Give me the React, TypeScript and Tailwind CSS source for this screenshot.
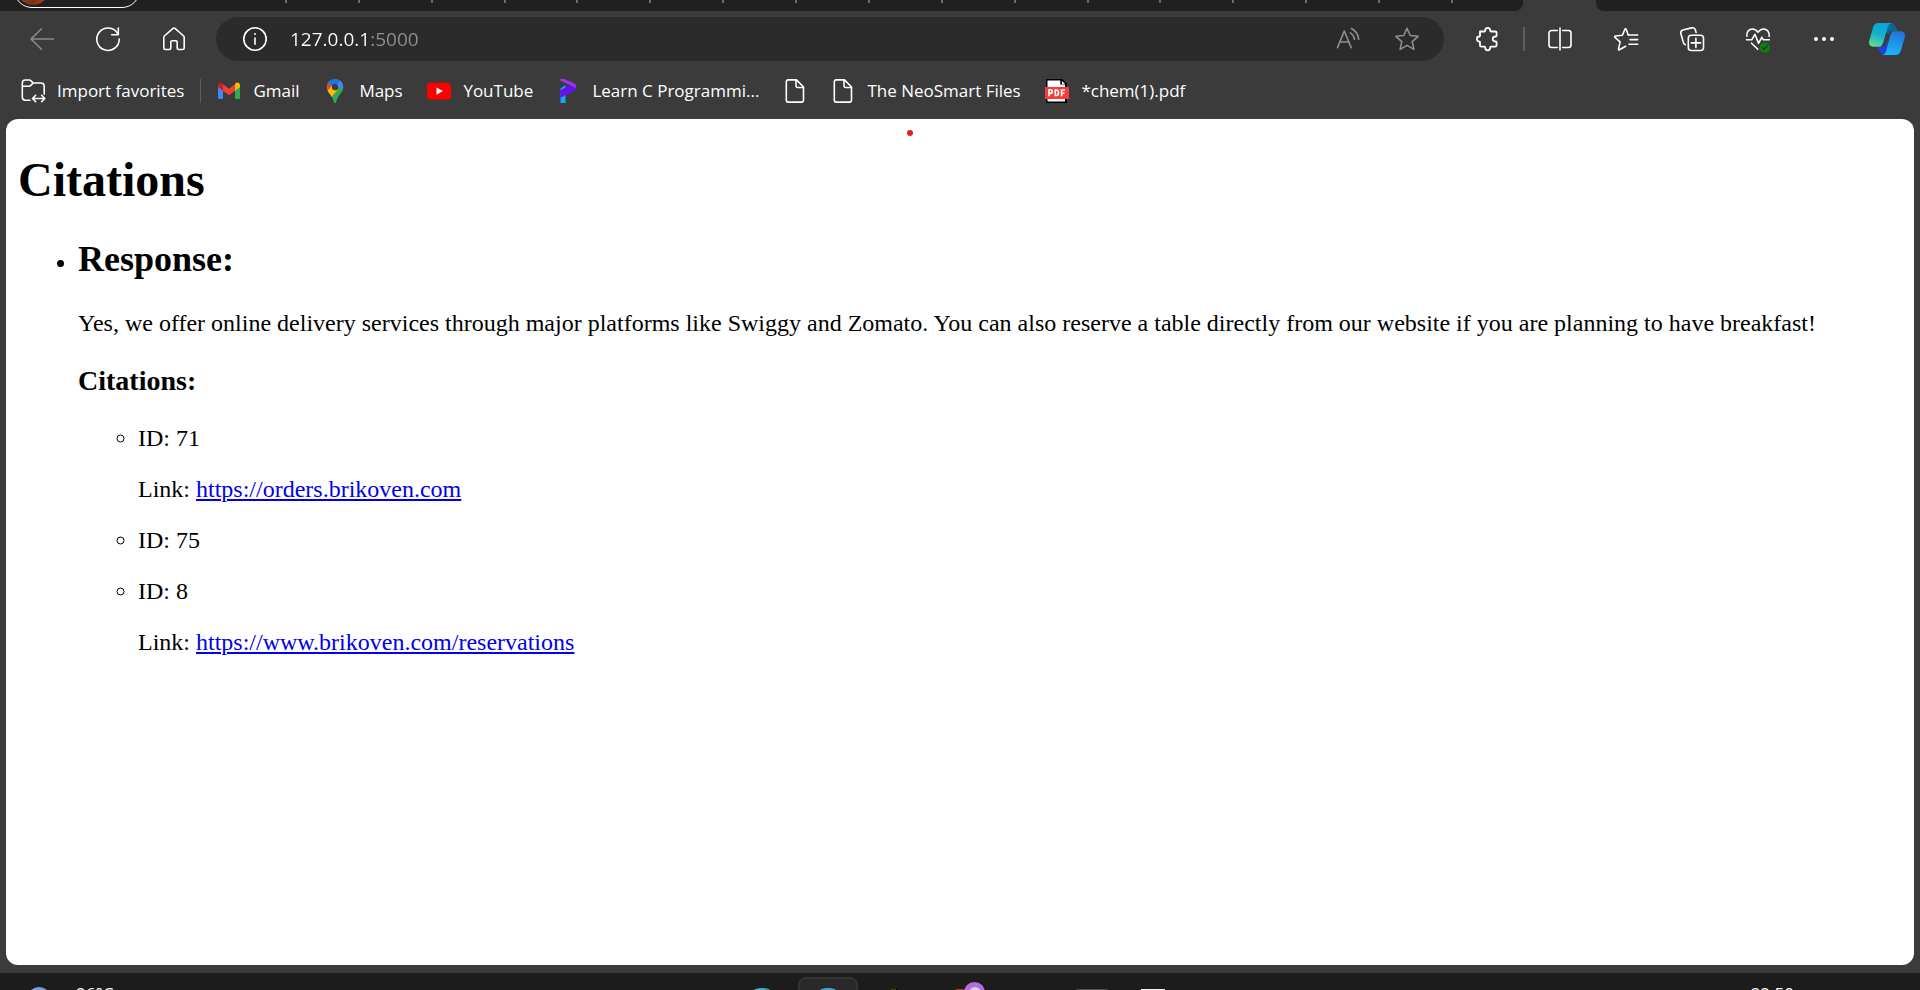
import type { ReactNode } from "react";

const stroke = {
  fill: "none",
  stroke: "currentColor",
  strokeWidth: 1.6,
  strokeLinecap: "round" as const,
  strokeLinejoin: "round" as const,
};

function Icon({ children }: { children: ReactNode }) {
  return (
    <svg viewBox="0 0 24 24" className="size-6 shrink-0 overflow-visible" aria-hidden="true" {...stroke}>
      {children}
    </svg>
  );
}

const BackIcon = () => (
  <Icon>
    <path d="M23.5 12H1M11.5 1.8 1 12l10.500 10.200" />
  </Icon>
);

const ReloadIcon = () => (
  <Icon>
    <path d="M23.200 12A11.200 11.200 0 1 1 21.500 6.300" />
    <path d="M22.300 1v6.700h-6.600" />
  </Icon>
);

const HomeIcon = () => (
  <Icon>
    <path d="M10.700 1.600 2.400 9c-.4.400-.6.800-.6 1.300V21c0 .9.600 1.500 1.500 1.500h4c.9 0 1.500-.6 1.500-1.500v-6c0-.8.500-1.300 1.300-1.300h3.800c.8 0 1.300.5 1.300 1.300v6c0 .9.600 1.500 1.500 1.500h4c.9 0 1.500-.6 1.500-1.500V10.300c0-.5-.2-.9-.6-1.300l-8.300-7.400c-.8-.7-1.800-.7-2.600 0Z" />
  </Icon>
);

const InfoIcon = () => (
  <Icon>
    <circle cx="12" cy="12" r="11.200" />
    <path d="M12 11v6.300" />
    <circle cx="12" cy="7" r="1" fill="currentColor" stroke="none" />
  </Icon>
);

const ReadAloudIcon = () => (
  <Icon>
    <path d="M1.500 20.600 8.300 4l6.900 16.600M3.700 15h9.200" />
    <path d="M14.500 5.800c2.300 1.500 3.700 3.700 4 6.600M15.500 1.500c4 2.300 6.700 6 7.200 10.800" />
  </Icon>
);

const StarIcon = () => (
  <Icon>
    <path d="M12 1.300 15.200 8.500l7.900.8-5.900 5.300 1.700 7.800L12 18.400l-6.900 4 1.700-7.800L.9 9.300l7.900-.8Z" />
  </Icon>
);

const PuzzleIcon = () => (
  <Icon>
    <path
      strokeWidth="1.800"
      d="M4 4.500h4.500c.5 0 .7-.4.7-.9 0-1.700 1-2.800 2.500-2.800s2.500 1.100 2.500 2.800c0 .5.300.9.800.9h4.300c.8 0 1.300.5 1.300 1.300v3c0 .5-.4.700-.9.700-1.800 0-3 .9-3 2.500s1.200 2.500 3 2.500c.5 0 .9.300.9.800v3c0 .8-.5 1.300-1.300 1.300H15c-.5 0-.8.400-.8.900 0 1.700-1 2.800-2.500 2.800s-2.500-1.100-2.500-2.800c0-.5-.2-.9-.7-.9H5.300c-.8 0-1.300-.5-1.300-1.300v-3c0-.5-.2-.8-.7-.8C1.900 14.500.9 13.500.9 12s1-2.500 2.400-2.500c.5 0 .7-.200.7-.7Z"
    />
  </Icon>
);

const SplitIcon = () => (
  <Icon>
    <path d="M9.300 3.500H3.600C2.200 3.500 1 4.600 1 6v12c0 1.400 1.200 2.500 2.600 2.500h5.700M14.700 3.500h5.700C21.800 3.500 23 4.600 23 6v12c0 1.400-1.200 2.500-2.600 2.500h-5.700M12 1v22" />
  </Icon>
);

const FavoritesIcon = () => (
  <Icon>
    <path d="m14.300 8.200-2.100-5.900c-.2-.7-1-.7-1.300 0L8.400 8.200 1.300 9c-.7.100-.9.800-.4 1.300l5.200 4.600-1.600 7.200c-.1.700.4 1 1 .7l6.200-3.500" />
    <path d="M15 8h8.700M16 12.600h7.700M15 17.300h8.700" />
  </Icon>
);

const CollectionsIcon = () => (
  <Icon>
    <rect x="8.300" y="8.300" width="15.200" height="15.200" rx="3" />
    <path d="M15.900 11.300v9.200M11.300 15.900h9.200" />
    <path d="M5.200 17.600c-1-.4-1.500-1.200-1.800-2.200L.9 6.700C.5 5.100 1.200 3.600 2.800 3L11.500.9c1.600-.4 3.200.3 3.800 1.800l.8 2.800" />
  </Icon>
);

const HealthIcon = () => (
  <Icon>
    <path d="M.9 9.300C.3 5.200 3 2 6.500 2c2.300 0 4 1.200 5.500 3.200C13.500 3.200 15.200 2 17.500 2c3.500 0 6.200 3.200 5.600 7.300" />
    <path d="M.5 12.800h5.200l3.200-5.500 3.600 9 3.300-6 1.500 2.500h6M5.500 16.200l6.300 6.100" />
    <circle cx="18.700" cy="20.500" r="5.300" fill="#107c10" stroke="none" />
    <path d="m16.300 20.700 1.700 1.600 3.200-3.400" stroke="#2b2b2b" strokeWidth="1.300" />
  </Icon>
);

const MoreIcon = () => (
  <Icon>
    <g fill="currentColor" stroke="none">
      <circle cx="4" cy="12" r="2" />
      <circle cx="12" cy="12" r="2" />
      <circle cx="20" cy="12" r="2" />
    </g>
  </Icon>
);

const CopilotIcon = () => (
  <svg viewBox="0 0 36 32" className="h-8 w-9" aria-hidden="true">
    <defs>
      <linearGradient id="cpLeft" x1="0.6" y1="0" x2="0.3" y2="1">
        <stop offset="0" stopColor="#0aa6da" />
        <stop offset="0.5" stopColor="#14b0cf" />
        <stop offset="1" stopColor="#62dc8c" />
      </linearGradient>
      <linearGradient id="cpRight" x1="0.6" y1="0" x2="0.4" y2="1">
        <stop offset="0" stopColor="#2472dc" />
        <stop offset="1" stopColor="#18b8fb" />
      </linearGradient>
    </defs>
    <path d="M18 0h4c2.800 0 4.200 1.500 5 4.500L28.200 8h-4c-2.500 0-4 1-4.700 3.500l-3-4Z" fill="#0c6797" />
    <path d="M8 23.500h8l3-7 1 8-3 7h-2c-2.800 0-4-1.500-4.800-4.200Z" fill="#1c43dc" />
    <path d="M9.500 0H23c-2.400.4-3.600 2-4.400 4.700l-4 13.800c-1 3.500-2.300 5.200-5.300 5.200H4.200c-3.700 0-4.800-2.800-3.800-6.500L3.900 5C4.800 1.800 6.500 0 9.500 0Z" fill="url(#cpLeft)" />
    <path d="M25.500 8.300h6.300c3.700 0 4.800 2.800 3.800 6.500L32.100 27c-.9 3.200-2.600 5-5.600 5H13.200c2.300-.5 3.400-2 4.200-4.700l3.500-13.500c.9-3.500 1.900-5.500 4.600-5.500Z" fill="url(#cpRight)" />
  </svg>
);

const ImportIcon = () => (
  <Icon>
    <path d="M9 21.300H4.500c-2 0-3.200-1.300-3.200-3.200V4.200C1.300 2.400 2.500 1 4.300 1h3.800c.9 0 1.500.3 2 .9l2 2.100h7.700c2 0 3.400 1.300 3.400 3.300v8M1.300 7.300h6.500c.9 0 1.500-.3 2.100-.9L12.100 4" />
    <path d="M12 19.500h11.500M14.700 16.300l-3.200 3.200 3.200 3.200M20.600 16.300l3.200 3.200-3.200 3.200" />
  </Icon>
);

const GmailIcon = () => (
  <svg viewBox="0 0 24 24" className="size-6 shrink-0" aria-hidden="true">
    <path d="M1 7v11.700c0 .8.500 1.300 1.300 1.300H6V10.500Z" fill="#4285f4" />
    <path d="M18 10.500V20h3.700c.8 0 1.300-.5 1.300-1.300V7Z" fill="#34a853" />
    <path d="M18 5.500v6.200L23 8V6.200c0-2.400-2.500-3.500-4.400-2.100Z" fill="#fbbc04" />
    <path d="M6 11.700V5.200l6 4.500 6-4.500v6.500l-6 4.500Z" fill="#ea4335" />
    <path d="M1 6.200V8l5 3.700V5.200L5.400 4.100C3.500 2.700 1 3.800 1 6.200Z" fill="#c5221f" />
  </svg>
);

const MapsIcon = () => (
  <svg viewBox="0 0 24 24" className="size-6 shrink-0" aria-hidden="true">
    <defs>
      <clipPath id="pin">
        <path d="M12 0C7.300 0 3.800 3.600 3.800 8.200c0 2.700 1.300 4.500 3 6.700 2 2.500 3 4.200 3.900 7.500.3 1.100.6 1.600 1.300 1.600s1-.5 1.300-1.600c.9-3.300 1.900-5 3.900-7.500 1.700-2.200 3-4 3-6.700C20.200 3.600 16.700 0 12 0Z" />
      </clipPath>
    </defs>
    <g clipPath="url(#pin)">
      <path d="M0 0h24v24H0Z" fill="#34a853" />
      <path d="M4 0h17L9 14 3 6Z" fill="#1a73e8" />
      <path d="M13 6 19 0l3 8-4 2Z" fill="#4285f4" />
      <path d="M3 2 9 7 4 13.500 2 9Z" fill="#ea4335" />
      <path d="m3.500 13 5-6 6 4-6.700 8Z" fill="#fbbc04" />
    </g>
    <circle cx="12" cy="8.200" r="3.100" fill="#3b3b3b" />
  </svg>
);

const YouTubeIcon = () => (
  <svg viewBox="0 0 24 24" className="size-6 shrink-0" aria-hidden="true">
    <rect x="0" y="3.700" width="24" height="16.800" rx="4" fill="#f00" />
    <path d="m9.500 8.500 6.400 3.600-6.400 3.600Z" fill="#fff" />
  </svg>
);

const ProgramizIcon = () => (
  <svg viewBox="0 0 24 24" className="size-6 shrink-0" aria-hidden="true">
    <path d="M4.500 9.500 9.500 6v18h-5Z" fill="#12a5fb" />
    <path d="M4 11.500 14 6l6-.5v3.200c0 1.500-.6 2.300-1.800 3L4.500 18.800Z" fill="#6610f2" />
    <path d="M4 0h4.500L18.300 4.500c1.200.6 1.700 1.400 1.700 2.800V9L4 1.500Z" fill="#9a35ee" />
  </svg>
);

const PageIcon = () => (
  <Icon>
    <path d="M6 .9h7.500L20.500 8v13c0 1.200-.8 2.100-2 2.100H5.300c-1.200 0-2-.9-2-2.100V3c0-1.200.8-2.100 2-2.100Z" />
    <path d="M13 1v5.800c0 1 .6 1.700 1.600 1.700h5.700" />
  </Icon>
);

const PdfIcon = () => (
  <svg viewBox="0 0 24 24" className="size-6 shrink-0" aria-hidden="true">
    <path d="M1.200 0h16L22 5v19H1.200Z" fill="#000" />
    <path d="M2.500 1.500h12.800v4H20v17H2.500Z" fill="#fff" />
    <path d="m17 2 3 3h-3Z" fill="#fff" />
    <rect x="0" y="8" width="24" height="12" fill="#fb3b3b" />
    <g fill="none" stroke="#fff" strokeWidth="1.600">
      <path d="M4 17.300v-6.500h1.500a1.800 1.800 0 0 1 0 3.600H4" />
      <path d="M10.300 11v5.500h.9c1.500 0 2.300-1 2.300-2.700s-.8-2.800-2.300-2.800Z" />
      <path d="M20 11h-3.400v6.300M16.600 14.200h2.900" />
    </g>
  </svg>
);

function ToolButton({ label, children }: { label: string; children: ReactNode }) {
  return (
    <button type="button" aria-label={label} className="flex h-11 w-[66px] shrink-0 items-center justify-center">
      {children}
    </button>
  );
}

function TabStrip() {
  return (
    <div className="flex h-[11px] shrink-0 overflow-hidden bg-[#3b3b3b]">
      <div className="flex min-w-0 flex-1 items-end rounded-br-lg bg-[#202020]">
        <button
          type="button"
          aria-label="Profile"
          className="mb-[3px] ml-[14px] flex h-9 w-[126px] shrink-0 items-center rounded-full border border-white"
        >
          <span className="mb-0.5 ml-0.5 size-8 rounded-full bg-linear-to-r from-[#8a4a35] via-[#7a2f16] to-[#b84a12]" />
        </button>
        <div className="mr-[70px] ml-[74px] flex h-full min-w-0 flex-1 items-start">
          {Array.from({ length: 17 }, (_, i) => (
            <span key={i} className="h-[3px] min-w-0 flex-1 border-r-2 border-[#6b6b6b]" />
          ))}
        </div>
      </div>
      <div className="w-[73px] shrink-0" />
      <div className="w-[324px] shrink-0 rounded-bl-lg bg-[#202020]" />
    </div>
  );
}

function Toolbar() {
  return (
    <div className="flex h-14 shrink-0 items-center pr-[3px] pl-[9px] text-white">
      <div className="flex text-[#8a8a8a]">
        <ToolButton label="Back">
          <BackIcon />
        </ToolButton>
      </div>
      <ToolButton label="Refresh">
        <ReloadIcon />
      </ToolButton>
      <ToolButton label="Home">
        <HomeIcon />
      </ToolButton>
      <div className="ml-[9px] flex h-11 min-w-0 flex-1 items-center rounded-full bg-[#2b2b2b] pr-2">
        <button type="button" aria-label="View site information" className="ml-[27px] shrink-0">
          <InfoIcon />
        </button>
        <input
          type="text"
          aria-label="Address and search bar"
          defaultValue="127.0.0.1:5000"
          className="ml-[23px] h-8 min-w-0 flex-1 bg-[linear-gradient(to_right,#ffffff_79px,#8f8f8f_79px)] bg-clip-text font-['Open_Sans',sans-serif] text-[19px] text-transparent outline-none"
        />
        <button type="button" aria-label="Read aloud" className="flex w-[59px] justify-center text-[#8f8f8f]">
          <ReadAloudIcon />
        </button>
        <button type="button" aria-label="Add to favorites" className="flex w-[59px] justify-center text-[#8f8f8f]">
          <StarIcon />
        </button>
      </div>
      <div className="ml-[11px] flex items-center">
        <ToolButton label="Extensions">
          <PuzzleIcon />
        </ToolButton>
        <span className="mx-0.5 h-6 w-0.5 bg-[#5e5e5e]" />
        <ToolButton label="Split screen">
          <SplitIcon />
        </ToolButton>
        <ToolButton label="Favorites">
          <FavoritesIcon />
        </ToolButton>
        <ToolButton label="Collections">
          <CollectionsIcon />
        </ToolButton>
        <ToolButton label="Browser essentials">
          <HealthIcon />
        </ToolButton>
        <ToolButton label="Settings and more">
          <MoreIcon />
        </ToolButton>
        <button type="button" aria-label="Copilot" className="flex w-[60px] justify-center">
          <CopilotIcon />
        </button>
      </div>
    </div>
  );
}

function Favorite({ icon, label, width, name }: { icon: ReactNode; label?: string; width?: string; name?: string }) {
  return (
    <a href="#" aria-label={name} className="flex shrink-0 items-center gap-3">
      {icon}
      {label && <span className={`whitespace-nowrap ${width ?? ""}`}>{label}</span>}
    </a>
  );
}

function FavoritesBar() {
  return (
    <nav
      aria-label="Favorites bar"
      className="flex h-[52px] shrink-0 items-center gap-4 overflow-hidden pb-1 pl-[21px] font-['Open_Sans',sans-serif] text-[17px] leading-6 text-white"
    >
      <div className="flex items-center gap-4">
        <button type="button" className="flex items-center gap-3">
          <ImportIcon />
          <span className="text-left whitespace-nowrap">Import favorites</span>
        </button>
        <span className="h-6 w-px bg-[#5e5e5e]" />
      </div>
      <div className="flex items-center gap-6">
        <Favorite icon={<GmailIcon />} label="Gmail" width="w-[46px]" />
        <Favorite icon={<MapsIcon />} label="Maps" width="w-[44px]" />
        <Favorite icon={<YouTubeIcon />} label="YouTube" width="w-[69px]" />
        <Favorite icon={<ProgramizIcon />} label="Learn C Programmi..." width="w-[167px]" />
        <Favorite icon={<PageIcon />} name="Untitled page" />
        <Favorite icon={<PageIcon />} label="The NeoSmart Files" width="w-[154px]" />
        <Favorite icon={<PdfIcon />} label="*chem(1).pdf" />
      </div>
    </nav>
  );
}

const citations = [
  { id: 71, link: "https://orders.brikoven.com" },
  { id: 75 },
  { id: 8, link: "https://www.brikoven.com/reservations" },
];

function Page() {
  return (
    <main className="relative mx-1.5 min-h-0 flex-1 overflow-auto rounded-xl bg-white px-3 pt-[33px] pb-8 font-['Liberation_Serif',serif] text-2xl leading-[27px] text-black">
      <span className="absolute top-[11px] left-[47.2%] size-1.5 rounded-full bg-[#e81c23]" />
      <h1 className="text-5xl leading-[55px] font-bold">Citations</h1>
      <ul className="mt-8 list-disc pl-[60px]">
        <li>
          <h2 className="text-4xl leading-[41px] font-bold">Response:</h2>
          <p className="mt-[30px]">
            Yes, we offer online delivery services through major platforms like Swiggy and Zomato. You can also reserve
            a table directly from our website if you are planning to have breakfast!
          </p>
          <h3 className="mt-7 text-[28px] leading-8 font-bold">Citations:</h3>
          <ul className="mt-7 flex list-[circle] flex-col gap-6 pl-[60px]">
            {citations.map((c) => (
              <li key={c.id}>
                <p>ID: {c.id}</p>
                {c.link && (
                  <p className="mt-6">
                    Link:{" "}
                    <a href={c.link} className="text-[#0000ee] underline">
                      {c.link}
                    </a>
                  </p>
                )}
              </li>
            ))}
          </ul>
        </li>
      </ul>
    </main>
  );
}

function Taskbar() {
  return (
    <footer className="mt-2 grid h-[17px] shrink-0 grid-cols-[1fr_auto_1fr] items-start overflow-hidden bg-[#1c1c1c] font-['Open_Sans',sans-serif] text-[17px] leading-6 text-white">
      <div className="flex items-start pt-[9px] pl-[27px]">
        <span className="mt-[5px] size-6 shrink-0 rounded-full bg-[#7b9be0]" />
        <span className="ml-[25px]">26°C</span>
      </div>
      <div className="flex gap-1.5 pt-1">
        <button type="button" aria-label="Edge" className="flex h-[60px] w-[60px] justify-center pt-[11px]">
          <span className="size-9 rounded-full bg-[#35b5d5]" />
        </button>
        <button
          type="button"
          aria-label="Edge, active window"
          className="flex h-[60px] w-[60px] justify-center rounded-lg border-2 border-[#333333] bg-[#292929] pt-[9px]"
        >
          <span className="size-9 rounded-full bg-[#35b5d5]" />
        </button>
        <button type="button" aria-label="Editor" className="flex h-[60px] w-[60px] justify-center pt-3">
          <span className="h-8 w-[5px] bg-[#4a4510]" />
          <span className="h-8 w-0.5 bg-black" />
        </button>
        <button type="button" aria-label="Chrome" className="relative flex h-[60px] w-[60px] justify-center pt-3">
          <span className="size-8 rounded-full bg-[#d9442c]" />
          <span className="absolute top-[5px] left-[34px] flex size-[21px] items-end justify-center rounded-full bg-[#b66be0] pb-1">
            <span className="size-3 rounded-full bg-[#d9d0dd]" />
          </span>
        </button>
        <button type="button" aria-label="Store" className="h-[60px] w-[60px]" />
        <button type="button" aria-label="Terminal" className="flex h-[60px] w-[60px] justify-center pt-3">
          <span className="h-8 w-[34px] rounded-sm bg-[#555555]" />
        </button>
        <button type="button" aria-label="Notepad" className="flex h-[60px] w-[60px] pt-3 pl-[13px]">
          <span className="h-8 w-6 bg-[#eeeeee]" />
        </button>
      </div>
      <div className="flex justify-end pt-[9px] pr-[126px]">
        <time>22:50</time>
      </div>
    </footer>
  );
}

export default function App() {
  return (
    <div className="flex h-screen flex-col overflow-hidden bg-[#3b3b3b]">
      <TabStrip />
      <Toolbar />
      <FavoritesBar />
      <Page />
      <Taskbar />
    </div>
  );
}
